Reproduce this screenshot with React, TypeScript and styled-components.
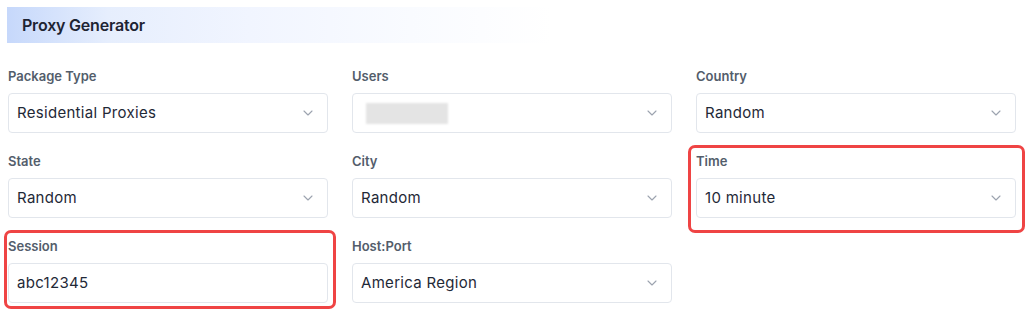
import React from 'react';
import styled, { createGlobalStyle } from 'styled-components';

interface MarkProps {
  top: number;
  right: number;
  bottom: number;
  left: number;
}

const GlobalStyle = createGlobalStyle`
  body {
    margin: 0;
    background: #ffffff;
    font-family: Inter, 'Noto Sans', sans-serif;
  }
`;

const Page = styled.div`
  box-sizing: border-box;
  min-height: 100vh;
  padding: 7px 15px 16px 7px;
`;

const Header = styled.div`
  height: 36px;
  display: flex;
  align-items: center;
  padding-left: 15px;
  background: linear-gradient(
    90deg,
    #c6d8fb 0%,
    #e6eefd 10%,
    #f1f5ff 24%,
    #f9fbff 40%,
    #ffffff 54%
  );
`;

const Title = styled.h2`
  margin: 0;
  font-size: 16px;
  font-weight: 600;
  color: #1e2433;
  letter-spacing: -0.2px;
`;

const Grid = styled.div`
  display: grid;
  grid-template-columns: repeat(3, 320px);
  column-gap: 24px;
  row-gap: 18px;
  margin-top: 23px;
  padding-left: 1px;
`;

const Field = styled.div`
  position: relative;
  display: flex;
  flex-direction: column;
`;

// hand-drawn red annotation round a field
const Mark = styled.div<MarkProps>`
  position: absolute;
  top: ${(p) => -p.top}px;
  right: ${(p) => -p.right}px;
  bottom: ${(p) => -p.bottom}px;
  left: ${(p) => -p.left}px;
  border: 3px solid #ef4444;
  border-radius: 7px;
  pointer-events: none;
`;

const Label = styled.label`
  font-size: 13px;
  line-height: 20px;
  font-weight: 600;
  color: #535d6b;
  margin-bottom: 7px;
`;

const Box = styled.div`
  height: 40px;
  box-sizing: border-box;
  border: 1px solid #e2e6ec;
  border-radius: 4px;
  display: flex;
  align-items: center;
  justify-content: space-between;
  padding: 0 14px 0 8px;
  font-size: 15px;
  line-height: 20px;
  letter-spacing: 0.3px;
  color: #1f2937;
  background: #ffffff;
`;

const Value = styled.span`
  margin-top: -1px;
`;

const Blurred = styled.div`
  width: 82px;
  height: 21px;
  margin-left: 5px;
  background: #e4e4e4;
  filter: blur(0.8px);
`;

const Chevron = () => (
  <svg width="10" height="6" viewBox="0 0 10 6" fill="none">
    <path d="M1 1l4 4 4-4" stroke="#9ca3af" strokeWidth="1.1" strokeLinecap="round" strokeLinejoin="round" />
  </svg>
);

const fields = [
  { label: 'Package Type', value: 'Residential Proxies' },
  { label: 'Users', value: null },
  { label: 'Country', value: 'Random' },
  { label: 'State', value: 'Random' },
  { label: 'City', value: 'Random' },
  { label: 'Time', value: '10 minute', mark: { top: 6, right: 9, bottom: 15, left: 8 } },
  { label: 'Session', value: 'abc12345', input: true, mark: { top: 6, right: 8, bottom: 6, left: 4 } },
  { label: 'Host:Port', value: 'America Region' },
];

export default function App() {
  return (
    <>
      <GlobalStyle />
      <Page>
        <Header>
          <Title>Proxy Generator</Title>
        </Header>
        <Grid>
          {fields.map((f) => (
            <Field key={f.label}>
              <Label>{f.label}</Label>
              <Box>
                {f.value ? <Value>{f.value}</Value> : <Blurred />}
                {!f.input && <Chevron />}
              </Box>
              {f.mark && <Mark {...f.mark} />}
            </Field>
          ))}
        </Grid>
      </Page>
    </>
  );
}
